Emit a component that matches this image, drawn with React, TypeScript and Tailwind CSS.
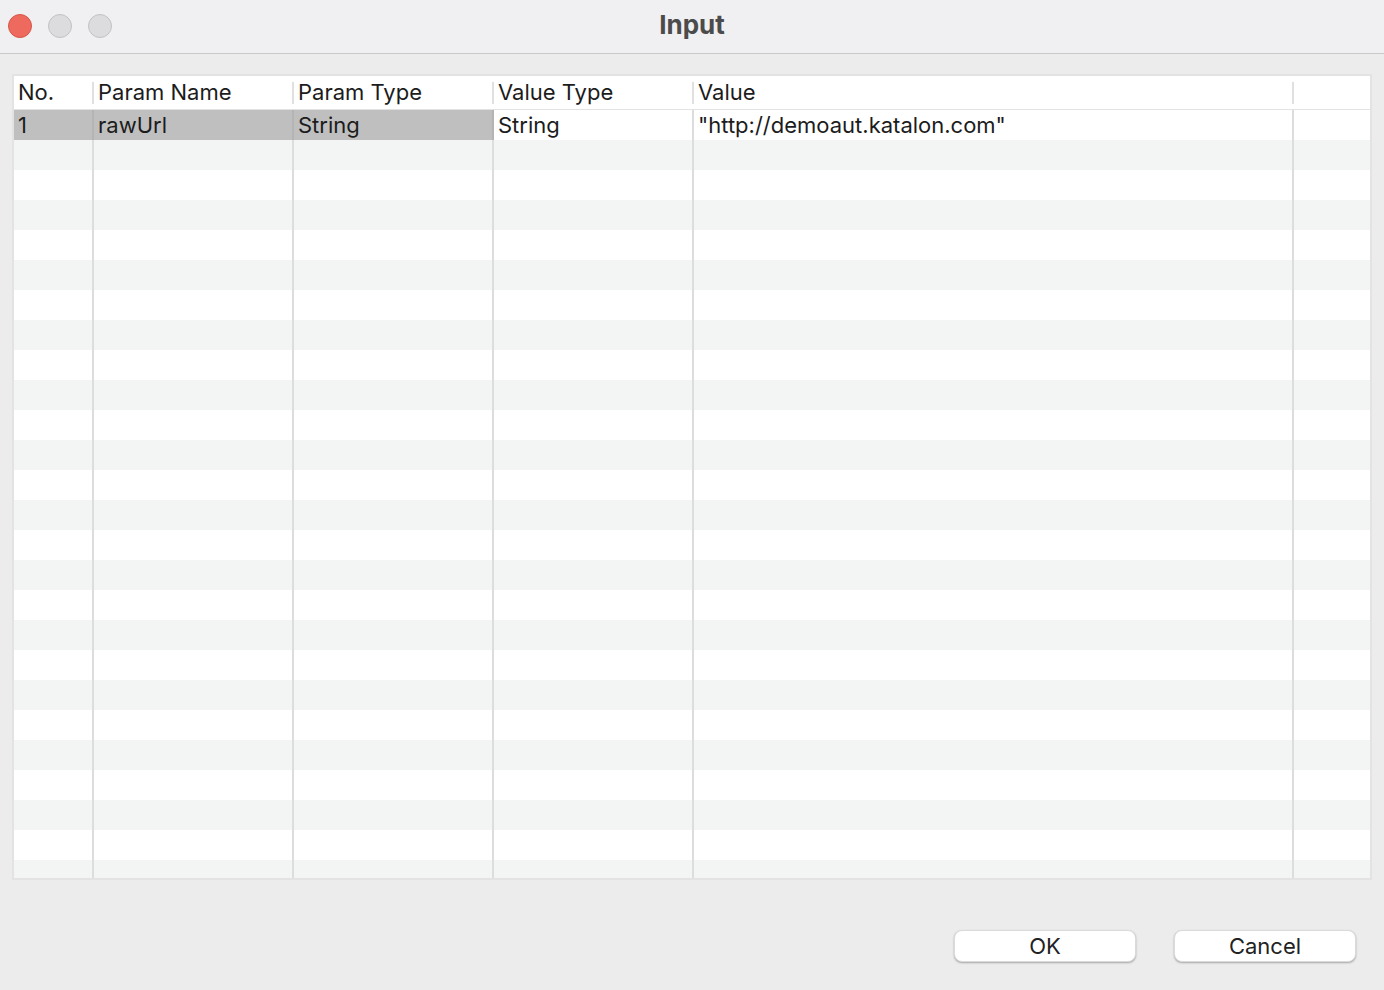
const COLS = ["No.", "Param Name", "Param Type", "Value Type", "Value", ""];

type TParam = {
  no: string;
  name: string;
  paramType: string;
  valueType: string;
  value: string;
};

const params: TParam[] = [
  {
    no: "1",
    name: "rawUrl",
    paramType: "String",
    valueType: "String",
    value: '"http://demoaut.katalon.com"',
  },
];

const EMPTY_ROWS = 25;

function TrafficLights() {
  return (
    <div className="flex items-center gap-4 pl-2 mb-[2px]">
      <span className="h-6 w-6 rounded-full bg-[#ee6a5f] border border-[#d6554a]" />
      <span className="h-6 w-6 rounded-full bg-[#dcdbde] border border-[#c2c1c4]" />
      <span className="h-6 w-6 rounded-full bg-[#dcdbde] border border-[#c2c1c4]" />
    </div>
  );
}

export default function App() {
  const gridCols = "grid grid-cols-[80px_200px_200px_200px_600px_1fr]";
  const cell = "flex items-center pl-1 border-r-2 text-[22px] leading-none whitespace-nowrap overflow-hidden";

  return (
    <div
      className="h-[990px] w-[1384px] flex flex-col bg-[#ececec] overflow-hidden text-[#1c1c1c]"
      style={{ fontFamily: "Inter, 'Liberation Sans', sans-serif" }}
    >
      {/* title bar */}
      <div className="h-[54px] shrink-0 bg-[#f0eff2] border-b border-[#c9c8cb] relative flex items-center">
        <TrafficLights />
        <h1 className="absolute inset-x-0 top-[10px] text-center text-[26px] leading-[30px] font-bold text-[#4b4b4b] pointer-events-none">
          Input
        </h1>
      </div>

      <div className="flex-1 flex flex-col pt-[20px] px-[12px]">
        {/* table */}
        <div className="h-[806px] w-[1360px] border-2 border-[#e3e3e3] bg-white overflow-hidden">
          <div className={`${gridCols} h-[34px] border-b border-[#e2e2e2] bg-white`}>
            {COLS.map((col, i) => (
              <div key={i} className="flex items-center">
                <span className="flex-1 pl-1 pb-[2px] text-[22px] leading-none whitespace-nowrap">
                  {col}
                </span>
                {i < COLS.length - 1 && (
                  <span className="h-[22px] w-[2px] bg-[#e0e0e0]" />
                )}
              </div>
            ))}
          </div>

          {params.map((p) => (
            <div key={p.no} className={`${gridCols} h-[30px] bg-white`}>
              <div className={`${cell} bg-[#bfbfbf] border-[#b4b4b4]`}>{p.no}</div>
              <div className={`${cell} bg-[#bfbfbf] border-[#b4b4b4]`}>{p.name}</div>
              <div className={`${cell} bg-[#bfbfbf] border-[#b4b4b4]`}>{p.paramType}</div>
              <div className={`${cell} border-[#dddddd]`}>{p.valueType}</div>
              <div className={`${cell} border-[#dddddd]`}>{p.value}</div>
              <div />
            </div>
          ))}

          {Array.from({ length: EMPTY_ROWS }).map((_, r) => (
            <div
              key={r}
              className={`${gridCols} h-[30px] ${r % 2 === 0 ? "bg-[#f3f4f4]" : "bg-white"}`}
            >
              {[0, 1, 2, 3, 4].map((c) => (
                <div key={c} className="border-r-2 border-[#dddddd]" />
              ))}
              <div />
            </div>
          ))}
        </div>

        {/* buttons */}
        <div className="flex justify-end gap-[38px] mt-[50px] pr-[16px]">
          <button className="h-8 w-[182px] rounded-lg bg-white text-[22px] leading-none text-[#222] shadow-[0_1px_2px_rgba(0,0,0,0.3)] border border-[#dadada]">
            OK
          </button>
          <button className="h-8 w-[182px] rounded-lg bg-white text-[22px] leading-none text-[#222] shadow-[0_1px_2px_rgba(0,0,0,0.3)] border border-[#dadada]">
            Cancel
          </button>
        </div>
      </div>
    </div>
  );
}
